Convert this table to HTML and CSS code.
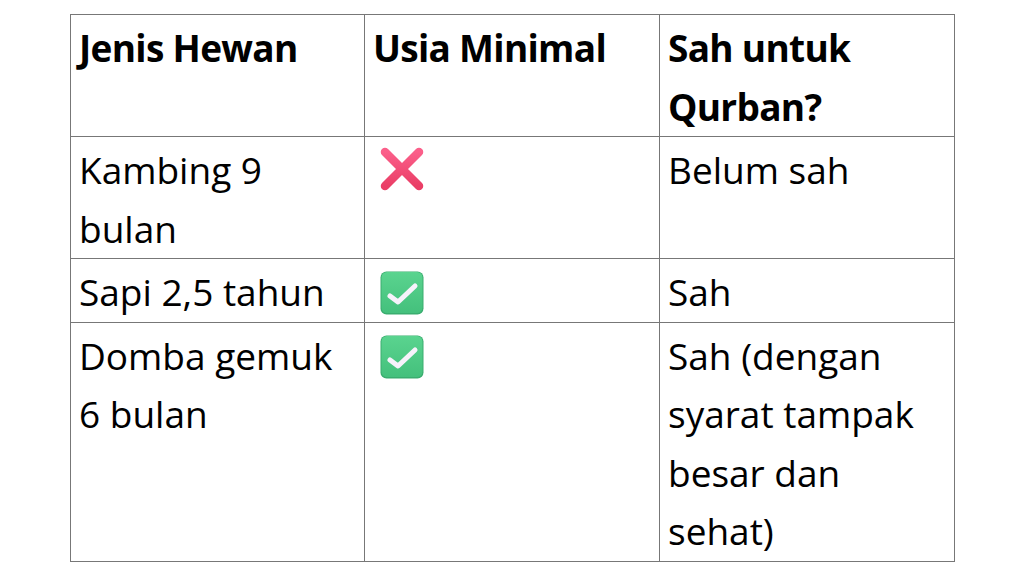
FILE: index.html
```html
<!DOCTYPE html>
<html lang="id">
<head>
<meta charset="utf-8">
<title>Qurban</title>
<link rel="stylesheet" href="styles.css">
</head>
<body>
<div class="page">
  <table class="grid">
    <colgroup>
      <col class="c1"><col class="c2"><col class="c3">
    </colgroup>
    <tr class="head">
      <th>Jenis Hewan</th>
      <th>Usia Minimal</th>
      <th>Sah untuk Qurban?</th>
    </tr>
    <tr>
      <td>Kambing 9 bulan</td>
      <td>
        <svg class="emoji emoji-x" viewBox="0 0 44 44" aria-label="tidak">
          <defs>
            <linearGradient id="gx" x1="0" y1="0" x2="0" y2="1">
              <stop offset="0" stop-color="#fb5f8a"/>
              <stop offset="1" stop-color="#ea3e66"/>
            </linearGradient>
          </defs>
          <path d="M5 5 L39 39 M39 5 L5 39" stroke="url(#gx)" stroke-width="8.5" stroke-linecap="round" fill="none"/>
        </svg>
      </td>
      <td>Belum sah</td>
    </tr>
    <tr>
      <td>Sapi 2,5 tahun</td>
      <td>
        <svg class="emoji emoji-check" viewBox="0 0 44 44" aria-label="ya">
          <defs>
            <linearGradient id="gc" x1="0" y1="0" x2="0" y2="1">
              <stop offset="0" stop-color="#5ad48f"/>
              <stop offset="1" stop-color="#44c07c"/>
            </linearGradient>
          </defs>
          <rect x="0.5" y="0.5" width="43" height="43" rx="6" fill="#3aad6f"/>
          <rect x="1.5" y="1" width="41" height="41" rx="5.5" fill="url(#gc)"/>
          <path d="M10 25 L18 31 L35 15" stroke="#f7f2fb" stroke-width="5" stroke-linecap="round" stroke-linejoin="round" fill="none"/>
        </svg>
      </td>
      <td>Sah</td>
    </tr>
    <tr>
      <td>Domba gemuk 6 bulan</td>
      <td>
        <svg class="emoji emoji-check" viewBox="0 0 44 44" aria-label="ya">
          <rect x="0.5" y="0.5" width="43" height="43" rx="6" fill="#3aad6f"/>
          <rect x="1.5" y="1" width="41" height="41" rx="5.5" fill="url(#gc)"/>
          <path d="M10 25 L18 31 L35 15" stroke="#f7f2fb" stroke-width="5" stroke-linecap="round" stroke-linejoin="round" fill="none"/>
        </svg>
      </td>
      <td>Sah (dengan syarat tampak besar dan sehat)</td>
    </tr>
  </table>
</div>
</body>
</html>
```
FILE: styles.css
```css
html, body {
  margin: 0;
  padding: 0;
  background: #ffffff;
}

.page {
  padding: 14px 0 0 70px;
  font-family: "Open Sans", "Liberation Sans", sans-serif;
  color: #000000;
}

.grid {
  border-collapse: collapse;
  table-layout: fixed;
  width: 885px;
}

.c1 { width: 294px; }
.c2 { width: 295px; }
.c3 { width: 295px; }

.grid th,
.grid td {
  border: 1px solid #777777;
  padding: 4px 8px 0 8px;
  vertical-align: top;
  text-align: left;
  font-size: 37px;
  line-height: 58.5px;
  font-weight: 400;
}

.grid th {
  font-weight: 700;
  letter-spacing: -0.7px;
}

.emoji {
  display: block;
  width: 44px;
  height: 44px;
  margin-left: 7px;
}

.emoji-x {
  margin-top: 6px;
}

.emoji-check {
  margin-top: 8px;
}
```
